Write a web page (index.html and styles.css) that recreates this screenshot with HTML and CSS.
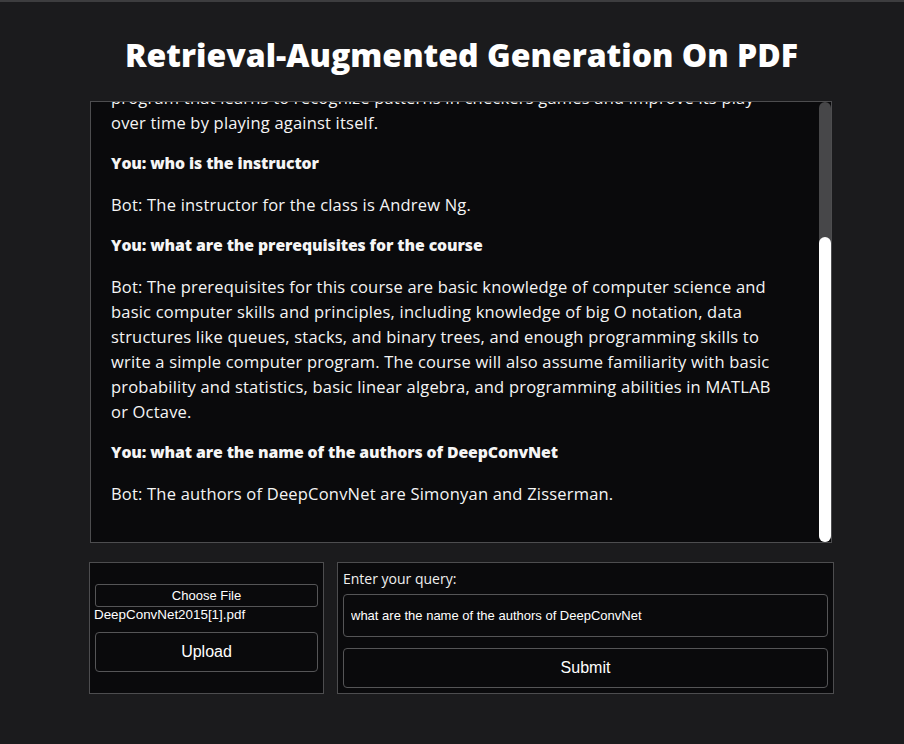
FILE: index.html
```html
<!DOCTYPE html>
<html lang="en">
<head>
<meta charset="utf-8">
<title>Retrieval-Augmented Generation On PDF</title>
<link rel="stylesheet" href="styles.css">
</head>
<body>
<div class="topline"></div>
<main class="app">
  <h1 class="title">Retrieval-Augmented Generation On PDF</h1>
  <section class="chat-box">
    <div class="chat" id="chat">
      <p class="bot">Bot: Hi! Upload a PDF and ask me anything about it.</p>
      <p class="you">You: what is machine learning</p>
      <p class="bot">Bot: Machine learning is the field of study that gives computers the ability to learn without being explicitly programmed. Arthur Samuel described it this way in 1959. One of the examples given in the course is Samuel's checkers playing<br>program that learns to recognize patterns in checkers games and improve its play<br>over time by playing against itself.</p>
      <p class="you">You: who is the instructor</p>
      <p class="bot">Bot: The instructor for the class is Andrew Ng.</p>
      <p class="you">You: what are the prerequisites for the course</p>
      <p class="bot">Bot: The prerequisites for this course are basic knowledge of computer science and basic computer skills and principles, including knowledge of big O notation, data structures like queues, stacks, and binary trees, and enough programming skills to write a simple computer program. The course will also assume familiarity with basic probability and statistics, basic linear algebra, and programming abilities in MATLAB or Octave.</p>
      <p class="you">You: what are the name of the authors of DeepConvNet</p>
      <p class="bot">Bot: The authors of DeepConvNet are Simonyan and Zisserman.</p>
    </div>
    <div class="scrollbar"><div class="thumb" id="thumb"></div></div>
  </section>
  <div class="controls">
    <form class="panel upload-panel">
      <div class="file-btn">Choose File</div>
      <div class="file-name">DeepConvNet2015[1].pdf</div>
      <button type="button" class="btn">Upload</button>
    </form>
    <form class="panel query-panel">
      <label class="query-label" for="q">Enter your query:</label>
      <input id="q" class="query-input" type="text" value="what are the name of the authors of DeepConvNet">
      <button type="button" class="btn">Submit</button>
    </form>
  </div>
</main>
<script src="script.js"></script>
</body>
</html>
```
FILE: styles.css
```css
* { box-sizing: border-box; }
html, body { margin: 0; padding: 0; }
body {
  background: #1b1b1d;
  color: #f5f5f5;
  font-family: "Open Sans", "DejaVu Sans", sans-serif;
  height: 744px;
  overflow: hidden;
}
.topline { height: 2px; background: #3d3d3f; }
.app {
  width: 745px;
  margin-left: 89px;
  display: flex;
  flex-direction: column;
}
.title {
  margin: 0 0 22px;
  padding-top: 29px;
  line-height: 48px;
  font-size: 32px;
  font-weight: 800;
  text-align: center;
  color: #fff;
}
.chat-box {
  position: relative;
  margin-left: 1px;
  width: 742px;
  height: 442px;
  background: #0a0a0c;
  border: 1px solid #4d4d4f;
}
.chat {
  height: 100%;
  overflow: hidden;
  padding: 4px 0 20px 20px;
}
.chat p {
  margin: 16px 40px 16px 0;
  font-size: 16.5px;
  line-height: 25px;
  letter-spacing: 0.2px;
}
.chat .you { font-weight: 800; font-size: 15.8px; letter-spacing: -0.1px; }
.scrollbar {
  position: absolute;
  top: 0;
  right: 0;
  bottom: 0;
  width: 12px;
  background: #474749;
  border-radius: 6px;
}
.thumb {
  position: absolute;
  left: 0;
  right: 0;
  bottom: 0;
  height: 304px;
  background: #fff;
  border-radius: 6px;
}
.controls {
  margin-top: 19px;
  display: flex;
  gap: 13px;
}
.panel {
  margin: 0;
  background: #0a0a0c;
  border: 1px solid #4d4d4f;
  padding: 5px;
  display: flex;
  flex-direction: column;
  height: 132px;
}
.upload-panel { width: 235px; justify-content: center; }
.query-panel { width: 497px; }
.file-btn {
  height: 23px;
  border: 1px solid #555557;
  border-radius: 3px;
  font: 13px/21px "Liberation Sans", Arial, sans-serif;
  text-align: center;
  color: #fff;
}
.file-name {
  font: 13.4px/16px "Liberation Sans", Arial, sans-serif;
  color: #fff;
  margin: 0 0 9px -1px;
}
.btn {
  height: 40px;
  width: 100%;
  background: #0a0a0c;
  border: 1px solid #555557;
  border-radius: 4px;
  color: #fff;
  font: 16px "Liberation Sans", Arial, sans-serif;
}
.query-label {
  font-size: 14px;
  line-height: 22px;
  color: #f0f0f0;
  margin-bottom: 4px;
}
.query-input {
  height: 43px;
  background: #0a0a0c;
  border: 1px solid #555557;
  border-radius: 4px;
  color: #fff;
  padding: 0 7px;
  font: 13px "Liberation Sans", Arial, sans-serif;
  margin-bottom: 11px;
  outline: none;
}
```
FILE: script.js
```js
var chat = document.getElementById('chat');
chat.scrollTop = chat.scrollHeight;
var thumb = document.getElementById('thumb');
var track = chat.clientHeight;
thumb.style.height = Math.round(track * chat.clientHeight / chat.scrollHeight) + 'px';
```
